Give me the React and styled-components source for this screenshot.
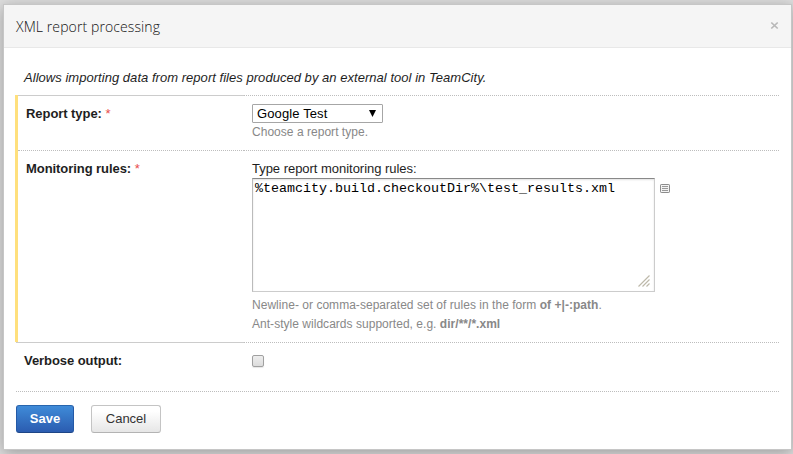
import React from "react";
import styled, { createGlobalStyle, css } from "styled-components";

const GlobalStyle = createGlobalStyle`
  * { box-sizing: border-box; }
  body {
    margin: 0;
    overflow: hidden;
    background: #dedede;
    font: 13px/16px "Liberation Sans", Arial, sans-serif;
    color: #1e1e1e;
  }
`;

const Page = styled.main`
  height: 454px;
  padding: 4px 1px 4px 3px;
`;

const Dialog = styled.section`
  height: 446px;
  border: 1px solid #c6c6c6;
  background: #fff;
  box-shadow: 0 3px 14px rgba(0, 0, 0, 0.3);
`;

const Header = styled.header`
  display: flex;
  justify-content: space-between;
  height: 43px;
  padding: 13px 12px 0;
  background: #f5f5f5;
  border-bottom: 1px solid #e8e8e8;
`;

const Title = styled.h1`
  margin: 0;
  font: 300 14px/18px "Open Sans", sans-serif;
  letter-spacing: 0.1px;
  color: #111;
`;

const CloseButton = styled.button`
  display: flex;
  width: 9px;
  height: 9px;
  margin: 3px 0 0;
  padding: 0;
  border: 0;
  background: none;
`;

const Body = styled.div`
  padding: 0 12px 0 11px;
`;

const Intro = styled.p`
  height: 47px;
  margin: 0;
  padding: 22px 0 0 9px;
  font-style: italic;
  letter-spacing: 0.035px;
`;

const Required = styled.div`
  border-left: 3px solid #ffe07d;
`;

const solidLabelTop = css`
  border-top: 1px solid #ccc;
`;

const Row = styled.div`
  display: grid;
  grid-template-columns: ${(p) => (p.$wide ? 228 : 226)}px 1fr;
  height: ${(p) => p.$height}px;
  margin-left: ${(p) => (p.$wide ? 1 : 0)}px;
`;

const Label = styled.div`
  padding: 10px 0 0 8px;
  border-top: 1px dotted #bdbdbd;
  font-weight: bold;
  letter-spacing: -0.06px;
  ${(p) => p.$solid && solidLabelTop}
`;

const Star = styled.span`
  color: #e84b4b;
  font-size: 13px;
  font-weight: normal;
`;

const Value = styled.div`
  padding: ${(p) => p.$top}px 0 0 8px;
  border-top: 1px dotted #bdbdbd;
`;

const Select = styled.button`
  display: flex;
  align-items: center;
  justify-content: space-between;
  width: 131px;
  height: 19px;
  padding: 0 6px 0 4px;
  border: 1px solid #a6a6a6;
  border-radius: 1px;
  background: #fff;
  color: #000;
  font: 13px/17px "Liberation Sans", Arial, sans-serif;
  letter-spacing: 0.12px;
`;

const Hint = styled.div`
  color: #888;
  font-size: 12px;
  line-height: 19px;
  letter-spacing: 0.03px;
`;

const Prompt = styled.div`
  height: 17px;
  letter-spacing: -0.03px;
`;

const Editor = styled.div`
  display: flex;
  align-items: flex-start;
  gap: 5px;
  height: 118px;
`;

const TextBox = styled.div`
  position: relative;
  width: 403px;
  height: 114px;
  padding: 2px;
  border: 1px solid #ccc;
  border-top-color: #888;
  border-left-color: #bbb;
  box-shadow: inset 0 1px 2px rgba(0, 0, 0, 0.12);
  color: #000;
  font: 13.333px/15px "Liberation Mono", "Courier New", monospace;
`;

const Grip = styled.svg`
  position: absolute;
  right: 4px;
  bottom: 4px;
`;

const ListIcon = styled.svg`
  margin-top: 6px;
`;

const Checkbox = styled.div`
  width: 12px;
  height: 12px;
  border: 1px solid #a0a0a0;
  border-radius: 2px;
  background: linear-gradient(#eee, #dcdcdc);
  box-shadow: 0 1px 1px rgba(0, 0, 0, 0.1);
`;

const Actions = styled.footer`
  display: flex;
  gap: 17px;
  margin-left: 1px;
  padding-top: 13px;
  border-top: 1px dotted #bdbdbd;
`;

const Button = styled.button`
  width: 70px;
  height: 28px;
  padding: 0 0 1px;
  border: 1px solid #c4c4c4;
  border-bottom-color: #b3b3b3;
  border-radius: 3px;
  background: linear-gradient(#fff 20%, #e6e6e6);
  color: #333;
  font: 13px/16px "Liberation Sans", Arial, sans-serif;
`;

const PrimaryButton = styled(Button)`
  width: 58px;
  border-color: #2865ad #2459a6 #1d4586;
  background: linear-gradient(#3f8bd8, #2b5cb0);
  color: #fff;
  font-weight: bold;
`;

export default function App() {
  return (
    <>
      <GlobalStyle />
      <Page>
        <Dialog role="dialog" aria-labelledby="title">
          <Header>
            <Title id="title">XML report processing</Title>
            <CloseButton aria-label="Close">
              <svg width="9" height="9" viewBox="0 0 9 9">
                <path d="M1.3 1.5L7.7 7.5M7.7 1.5L1.3 7.5" stroke="#b8b8b8" strokeWidth="1.7" />
              </svg>
            </CloseButton>
          </Header>
          <Body>
            <Intro>Allows importing data from report files produced by an external tool in TeamCity.</Intro>
            <Required>
              <Row $height={55}>
                <Label $solid>Report type: <Star>*</Star></Label>
                <Value $top={8}>
                  <Select>
                    Google Test
                    <svg width="7" height="7" viewBox="0 0 7 7"><path d="M0 0H7L3.5 7Z" fill="#000" /></svg>
                  </Select>
                  <Hint>Choose a report type.</Hint>
                </Value>
              </Row>
              <Row $height={192}>
                <Label>Monitoring rules: <Star>*</Star></Label>
                <Value $top={10}>
                  <Prompt>Type report monitoring rules:</Prompt>
                  <Editor>
                    <TextBox>
                      %teamcity.build.checkoutDir%\test_results.xml
                      <Grip width="12" height="12" viewBox="0 0 12 12">
                        <path d="M0.5 11.5L11.5 0.5M4.5 11.5L11.5 4.5M8.5 11.5L11.5 8.5" stroke="#bdb9aa" strokeWidth="1.2" />
                      </Grip>
                    </TextBox>
                    <ListIcon width="10" height="9" viewBox="0 0 10 9">
                      <rect x="0.5" y="0.5" width="9" height="8" rx="0.7" fill="#f3f3f3" stroke="#8c8c8c" />
                      <path d="M2 2.5H8M2 4.5H8M2 6.5H8" stroke="#999" />
                    </ListIcon>
                  </Editor>
                  <Hint>Newline- or comma-separated set of rules in the form <b>of +|-:path</b>.</Hint>
                  <Hint>Ant-style wildcards supported, e.g. <b>dir/**/*.xml</b></Hint>
                </Value>
              </Row>
            </Required>
            <Row $wide $height={49}>
              <Label $solid>Verbose output:</Label>
              <Value $top={12}><Checkbox role="checkbox" aria-checked="false" /></Value>
            </Row>
            <Actions>
              <PrimaryButton>Save</PrimaryButton>
              <Button>Cancel</Button>
            </Actions>
          </Body>
        </Dialog>
      </Page>
    </>
  );
}
